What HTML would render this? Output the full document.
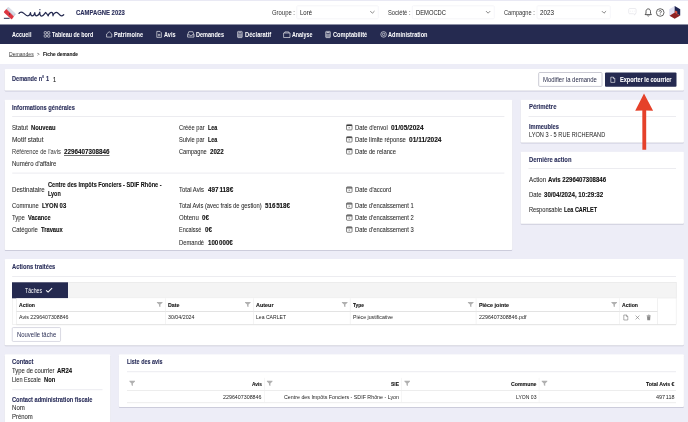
<!DOCTYPE html><html><head><meta charset="utf-8"><title>Fiche demande</title><style>

*{margin:0;padding:0;box-sizing:border-box}
html,body{width:688px;height:422px;overflow:hidden;background:#ededf7;font-family:"Liberation Sans",sans-serif}
#r{position:relative;width:688px;height:422px;overflow:hidden;background:#ededf7}
.b{position:absolute}
.card{position:absolute;background:#fff;border-radius:1px;box-shadow:0 1px 3px rgba(140,140,185,.42)}
.t{position:absolute;white-space:nowrap;transform-origin:0 50%;line-height:10px;height:10px;color:#1f1f1f}
#tx{position:absolute;left:0;top:0;width:688px;height:422px;will-change:transform}
.hr{position:absolute;height:1px;background:#ececf0}
#sv{position:absolute;left:0;top:0}

</style></head><body><div id="r">
<svg id="sv" width="688" height="422" viewBox="0 0 688 422"><defs><filter id="sh" x="-5%" y="-20%" width="110%" height="150%"><feDropShadow dx="0" dy="0.6" stdDeviation="0.7" flood-color="rgb(85,85,115)" flood-opacity="0.36"/></filter></defs>
<rect x="0" y="0" width="688" height="24.5" rx="0.0" fill="#fff"/>
<rect x="0" y="0" width="688" height="0.8" rx="0.0" fill="#e4e4f2"/>
<rect x="0" y="24.5" width="688" height="19.5" rx="0.0" fill="#252a50"/>
<rect x="0" y="44" width="688" height="20" rx="0.0" fill="#fff"/>
<svg x="0" y="0" overflow="visible" width="70" height="24" viewBox="0 0 70 24">
<path d="M6.3 9 L7.7 7.5 Q8.25 6.9 8.9 7.5 L15.4 13.6 Q15.9 14.1 15.5 14.7 L13.9 16.5 Z" fill="#c6cbd9"/>
<path d="M7.4 9 L9 7.6 L15 13.4 L13.6 15 Z" fill="#dfe2ea" opacity=".8"/>
<path d="M4.1 11.5 L6.3 9 L13.9 16.5 L12.1 19 Q11.7 19.5 11.1 19.1 L4.2 12.7 Q3.6 12.1 4.1 11.5 Z" fill="#dc3540"/>
<path d="M9.2 12.9 L10.2 13.9 L9.6 14.9 L9 14 Z" fill="#252a50"/>
<path d="M3.9 18.3 H9.6" stroke="#252a50" stroke-width="1" fill="none"/>
<path d="M19 13.4 C19.8 12.2 21 11.9 22.3 12.4 C24.5 13.3 25.8 15.8 27.9 15.8 C29.6 15.8 30.2 14 30.5 12.7 C30.5 14.5 31 15.8 32.3 15.8 C33.8 15.8 34.5 14.2 34.8 12.7 C34.8 14.5 35.3 15.8 36.6 15.8 C38.4 15.8 39.4 13.8 39.8 12.2 C39.8 14.2 40.2 16 41.7 16 C43.6 16 44.6 13.5 45.6 12.5 C46.6 13 47.2 14.5 48.2 15.8 C48.4 14.2 50.2 12.3 51.6 12.3 C52.8 12.3 53 14 53 15.8 C53.2 14 55.2 12.3 56.6 12.3 C58.4 12.3 59.6 15.8 61.3 15.8 C62.3 15.8 63.1 15.3 63.7 14.7" fill="none" stroke="#252a50" stroke-width="1.25" stroke-linecap="round" stroke-linejoin="round"/>
<circle cx="39.9" cy="9.7" r="0.65" fill="#252a50"/>
</svg>
<rect x="296.75" y="5.75" width="81.5" height="13.0" rx="1.0" fill="#fff" stroke="#ececf2" stroke-width="0.5"/>
<svg x="370" y="10.7" overflow="visible" width="4.8" height="3" viewBox="0 0 4.8 3"><path d="M0.3 0.4 L2.4 2.5 L4.5 0.4" fill="none" stroke="#555" stroke-width="0.7"/></svg>
<rect x="412.25" y="5.75" width="82.0" height="13.0" rx="1.0" fill="#fff" stroke="#ececf2" stroke-width="0.5"/>
<svg x="485.7" y="10.7" overflow="visible" width="4.8" height="3" viewBox="0 0 4.8 3"><path d="M0.3 0.4 L2.4 2.5 L4.5 0.4" fill="none" stroke="#555" stroke-width="0.7"/></svg>
<rect x="537.0" y="5.75" width="73.25" height="13.0" rx="1.0" fill="#fff" stroke="#ececf2" stroke-width="0.5"/>
<svg x="601.6" y="10.7" overflow="visible" width="4.8" height="3" viewBox="0 0 4.8 3"><path d="M0.3 0.4 L2.4 2.5 L4.5 0.4" fill="none" stroke="#555" stroke-width="0.7"/></svg>
<svg x="628.3" y="8.1" overflow="visible" width="8.2" height="7.6" viewBox="0 0 8.2 7.6"><path d="M1.4 0.4 H6.8 Q7.8 0.4 7.8 1.4 V4.6 Q7.8 5.6 6.8 5.6 H6.6 V7 L5 5.6 H1.4 Q0.4 5.6 0.4 4.6 V1.4 Q0.4 0.4 1.4 0.4 Z" fill="none" stroke="#e4e4ea" stroke-width="0.7"/><circle cx="2.3" cy="3" r="0.45" fill="#e0e0e6"/><circle cx="4.1" cy="3" r="0.45" fill="#e0e0e6"/><circle cx="5.9" cy="3" r="0.45" fill="#e0e0e6"/></svg>
<svg x="644.5" y="8.2" overflow="visible" width="7.5" height="8.8" viewBox="0 0 7.5 8.8"><path d="M3.75 0.7 C2.2 0.7 1.5 1.9 1.5 3.3 V5 L0.6 6.4 H6.9 L6 5 V3.3 C6 1.9 5.3 0.7 3.75 0.7 Z" fill="none" stroke="#222" stroke-width="0.75" stroke-linejoin="round"/><path d="M2.8 7.3 C3.1 8.1 4.4 8.1 4.7 7.3" fill="none" stroke="#222" stroke-width="0.7"/></svg>
<svg x="656" y="8.3" overflow="visible" width="8.4" height="8.4" viewBox="0 0 8.4 8.4"><circle cx="4.2" cy="4.2" r="3.8" fill="none" stroke="#222" stroke-width="0.7"/><path d="M3 3.3 C3 1.9 5.4 1.9 5.4 3.3 C5.4 4.2 4.2 4.2 4.2 5.2" fill="none" stroke="#222" stroke-width="0.7"/><circle cx="4.2" cy="6.3" r="0.45" fill="#222"/></svg>
<svg x="0" y="0" overflow="visible" width="688" height="24" viewBox="0 0 688 24">
<path d="M674.7 6 L680.2 9.2 V15.6 L674.7 18.8 L669.2 15.6 V9.2 Z" fill="#dfdff1"/>
<path d="M674.7 6 L680.2 9.2 V15.6 L674.7 12.4 Z" fill="#1f2450"/>
<path d="M674.7 12.4 L680.2 15.6 L674.7 18.8 L669.6 15.8 Z" fill="#8f2222"/>
<path d="M674.9 10.4 L677.3 11.6 V14 L674.9 12.6 Z" fill="#e5523c"/>
</svg>
<svg x="43.8" y="31.2" overflow="visible" width="6.4" height="6.4" viewBox="0 0 6.4 6.4"><rect x="0.4" y="0.4" width="2.3" height="2.3" rx="0.6" fill="none" stroke="#fff" stroke-width="0.6"/><rect x="3.7" y="0.4" width="2.3" height="2.3" rx="0.6" fill="none" stroke="#fff" stroke-width="0.6"/><rect x="0.4" y="3.7" width="2.3" height="2.3" rx="0.6" fill="none" stroke="#fff" stroke-width="0.6"/><rect x="3.7" y="3.7" width="2.3" height="2.3" rx="0.6" fill="none" stroke="#fff" stroke-width="0.6"/></svg>
<svg x="106.2" y="31.2" overflow="visible" width="6" height="6.4" viewBox="0 0 6 6.4"><path d="M0.4 2.8 L3 0.5 L5.6 2.8 V5.9 H0.4 Z" fill="none" stroke="#fff" stroke-width="0.6" stroke-linejoin="round"/></svg>
<svg x="156.4" y="31" overflow="visible" width="5.4" height="6.8" viewBox="0 0 5.4 6.8"><path d="M0.4 0.4 H3.6 L5 1.8 V6.4 H0.4 Z" fill="none" stroke="#fff" stroke-width="0.6"/><path d="M1.5 3.4 H3.9 M1.5 4.7 H3.9" fill="none" stroke="#fff" stroke-width="0.6"/></svg>
<svg x="187.2" y="31.2" overflow="visible" width="7.2" height="6.4" viewBox="0 0 7.2 6.4"><path d="M0.4 3.6 L1.6 0.5 H5.6 L6.8 3.6 V5.9 H0.4 Z M0.4 3.6 H2.4 C2.4 5 4.8 5 4.8 3.6 H6.8" fill="none" stroke="#fff" stroke-width="0.6" stroke-linejoin="round"/></svg>
<svg x="237.2" y="31" overflow="visible" width="5.4" height="7" viewBox="0 0 5.4 7"><rect x="0.4" y="0.4" width="4.6" height="6.2" rx="0.6" fill="none" stroke="#fff" stroke-width="0.6"/><rect x="0.7" y="2.4" width="4" height="3.9" fill="#fff" opacity=".45"/><path d="M1.2 1.6 H4.2" fill="none" stroke="#fff" stroke-width="0.6"/></svg>
<svg x="283.2" y="31.5" overflow="visible" width="7.2" height="6.4" viewBox="0 0 7.2 6.4"><path d="M0.4 1.5 H6.8 V6 H0.4 Z M1.3 1.5 L1.7 0.4 H5.5 L5.9 1.5" fill="none" stroke="#fff" stroke-width="0.6" stroke-linejoin="round"/></svg>
<svg x="325.3" y="31" overflow="visible" width="5.4" height="7" viewBox="0 0 5.4 7"><rect x="0.4" y="0.4" width="4.6" height="6.2" rx="0.6" fill="none" stroke="#fff" stroke-width="0.6"/><rect x="0.7" y="2.6" width="4" height="3.7" fill="#fff" opacity=".45"/><path d="M1.1 1.3 H4.3 V2 H1.1Z" fill="#fff"/></svg>
<svg x="380.4" y="31.2" overflow="visible" width="6.4" height="6.4" viewBox="0 0 6.4 6.4"><circle cx="3.2" cy="3.2" r="2.8" fill="none" stroke="#fff" stroke-width="0.6"/><circle cx="3.2" cy="3.2" r="1.2" fill="none" stroke="#fff" stroke-width="0.6"/></svg>
<rect x="4.7" y="68.9" width="679.2" height="21.6" rx="1" fill="#fff" filter="url(#sh)"/>
<rect x="538.6999999999999" y="72.5" width="63.3" height="13.9" rx="1.0" fill="#fff" stroke="#bcbcc8" stroke-width="0.8"/>
<rect x="605" y="72.5" width="71.5" height="14.3" rx="1.0" fill="#252a50"/>
<svg x="610.4" y="76.8" overflow="visible" width="4.8" height="6" viewBox="0 0 4.8 6"><path d="M0.4 0.4 H3 L4.4 1.8 V5.6 H0.4 Z M3 0.4 V1.8 H4.4" fill="none" stroke="#fff" stroke-width="0.6"/></svg>
<rect x="4.7" y="99.7" width="507.5" height="150.2" rx="1" fill="#fff" filter="url(#sh)"/>
<rect x="12.2" y="116" width="492.2" height="1" fill="#ececf0"/>
<rect x="12.2" y="172.6" width="492.2" height="1" fill="#ececf0"/>
<svg x="346.2" y="124.1" overflow="visible" width="6.2" height="6.2" viewBox="0 0 6.2 6.2"><rect x="0.35" y="0.35" width="5.5" height="5.5" rx="0.8" fill="none" stroke="#2e2e2e" stroke-width="0.6"/><path d="M0.5 1.45 H5.7" stroke="#2e2e2e" stroke-width="1"/><path d="M2.3 3.7 H3.9" stroke="#2e2e2e" stroke-width="0.6"/></svg>
<svg x="346.2" y="136.2" overflow="visible" width="6.2" height="6.2" viewBox="0 0 6.2 6.2"><rect x="0.35" y="0.35" width="5.5" height="5.5" rx="0.8" fill="none" stroke="#2e2e2e" stroke-width="0.6"/><path d="M0.5 1.45 H5.7" stroke="#2e2e2e" stroke-width="1"/><path d="M2.3 3.7 H3.9" stroke="#2e2e2e" stroke-width="0.6"/></svg>
<svg x="346.2" y="148.2" overflow="visible" width="6.2" height="6.2" viewBox="0 0 6.2 6.2"><rect x="0.35" y="0.35" width="5.5" height="5.5" rx="0.8" fill="none" stroke="#2e2e2e" stroke-width="0.6"/><path d="M0.5 1.45 H5.7" stroke="#2e2e2e" stroke-width="1"/><path d="M2.3 3.7 H3.9" stroke="#2e2e2e" stroke-width="0.6"/></svg>
<svg x="346.2" y="186.5" overflow="visible" width="6.2" height="6.2" viewBox="0 0 6.2 6.2"><rect x="0.35" y="0.35" width="5.5" height="5.5" rx="0.8" fill="none" stroke="#2e2e2e" stroke-width="0.6"/><path d="M0.5 1.45 H5.7" stroke="#2e2e2e" stroke-width="1"/><path d="M2.3 3.7 H3.9" stroke="#2e2e2e" stroke-width="0.6"/></svg>
<svg x="346.2" y="202.5" overflow="visible" width="6.2" height="6.2" viewBox="0 0 6.2 6.2"><rect x="0.35" y="0.35" width="5.5" height="5.5" rx="0.8" fill="none" stroke="#2e2e2e" stroke-width="0.6"/><path d="M0.5 1.45 H5.7" stroke="#2e2e2e" stroke-width="1"/><path d="M2.3 3.7 H3.9" stroke="#2e2e2e" stroke-width="0.6"/></svg>
<svg x="346.2" y="214.4" overflow="visible" width="6.2" height="6.2" viewBox="0 0 6.2 6.2"><rect x="0.35" y="0.35" width="5.5" height="5.5" rx="0.8" fill="none" stroke="#2e2e2e" stroke-width="0.6"/><path d="M0.5 1.45 H5.7" stroke="#2e2e2e" stroke-width="1"/><path d="M2.3 3.7 H3.9" stroke="#2e2e2e" stroke-width="0.6"/></svg>
<svg x="346.2" y="226.4" overflow="visible" width="6.2" height="6.2" viewBox="0 0 6.2 6.2"><rect x="0.35" y="0.35" width="5.5" height="5.5" rx="0.8" fill="none" stroke="#2e2e2e" stroke-width="0.6"/><path d="M0.5 1.45 H5.7" stroke="#2e2e2e" stroke-width="1"/><path d="M2.3 3.7 H3.9" stroke="#2e2e2e" stroke-width="0.6"/></svg>
<rect x="520.7" y="99.7" width="163.2" height="42.9" rx="1" fill="#fff" filter="url(#sh)"/>
<rect x="528.5" y="116" width="147.5" height="1" fill="#ececf0"/>
<rect x="520.7" y="151.85" width="163.2" height="71.95" rx="1" fill="#fff" filter="url(#sh)"/>
<rect x="528.5" y="168" width="147.5" height="1" fill="#ececf0"/>
<svg x="630" y="90" overflow="visible" width="30" height="62" viewBox="630 90 30 62"><path d="M644 93.5 L653.1 110.7 L646.2 110.5 L646.2 149.8 L642.4 149.8 L642.3 110.5 L635.2 110.7 Z" fill="#e5412a"/></svg>
<rect x="4.7" y="258.9" width="679.2" height="86.4" rx="1" fill="#fff" filter="url(#sh)"/>
<rect x="12.2" y="276" width="663.8" height="1" fill="#ececf0"/>
<rect x="12.25" y="282.55" width="663.9" height="41.7" rx="0.0" fill="#fff" stroke="#e6e6e6" stroke-width="0.5"/>
<rect x="12.25" y="282.55" width="663.9" height="15.5" rx="0.0" fill="#f4f4f4" stroke="#e6e6e6" stroke-width="0.5"/>
<rect x="12" y="282.3" width="56" height="16" rx="0.0" fill="#252a50"/>
<svg x="45.5" y="287.6" overflow="visible" width="7.2" height="5.2" viewBox="0 0 7.2 5.2"><path d="M0.6 2.7 L2.6 4.5 L6.6 0.6" fill="none" stroke="#fff" stroke-width="1.1"/></svg>
<rect x="16.3" y="298.3" width="641.2" height="26.2" rx="0.0" fill="#fff"/><rect x="16.3" y="298.3" width="0.5" height="26.2" fill="#e3e3e3"/><rect x="657.0" y="298.3" width="0.5" height="26.2" fill="#e3e3e3"/>
<rect x="16.3" y="311" width="641.2" height="1" fill="#e3e3e3"/>
<rect x="16.3" y="324.2" width="659.7" height="1" fill="#e3e3e3"/>
<rect x="165.0" y="298.3" width="0.5" height="26" rx="0.0" fill="#e9e9e9"/>
<rect x="253.1" y="298.3" width="0.5" height="26" rx="0.0" fill="#e9e9e9"/>
<rect x="349.9" y="298.3" width="0.5" height="26" rx="0.0" fill="#e9e9e9"/>
<rect x="475.8" y="298.3" width="0.5" height="26" rx="0.0" fill="#e9e9e9"/>
<rect x="619.5" y="298.3" width="0.5" height="26" rx="0.0" fill="#e9e9e9"/>
<svg x="156.9" y="301.8" overflow="visible" width="5.6" height="5.4" viewBox="0 0 5.6 5.4"><path d="M0 0.1 H5.6 V0.9 L3.5 2.8 V5.3 L2.1 4.6 V2.8 L0 0.9 Z" fill="#b0b0b0"/></svg>
<svg x="245.0" y="301.8" overflow="visible" width="5.6" height="5.4" viewBox="0 0 5.6 5.4"><path d="M0 0.1 H5.6 V0.9 L3.5 2.8 V5.3 L2.1 4.6 V2.8 L0 0.9 Z" fill="#b0b0b0"/></svg>
<svg x="341.9" y="301.8" overflow="visible" width="5.6" height="5.4" viewBox="0 0 5.6 5.4"><path d="M0 0.1 H5.6 V0.9 L3.5 2.8 V5.3 L2.1 4.6 V2.8 L0 0.9 Z" fill="#b0b0b0"/></svg>
<svg x="467.9" y="301.8" overflow="visible" width="5.6" height="5.4" viewBox="0 0 5.6 5.4"><path d="M0 0.1 H5.6 V0.9 L3.5 2.8 V5.3 L2.1 4.6 V2.8 L0 0.9 Z" fill="#b0b0b0"/></svg>
<svg x="611.4" y="301.8" overflow="visible" width="5.6" height="5.4" viewBox="0 0 5.6 5.4"><path d="M0 0.1 H5.6 V0.9 L3.5 2.8 V5.3 L2.1 4.6 V2.8 L0 0.9 Z" fill="#b0b0b0"/></svg>
<svg x="623.4" y="314.6" overflow="visible" width="5" height="6" viewBox="0 0 5 6"><path d="M0.4 0.4 H3 L4.4 1.8 V5.4 H0.4 Z M3 0.4 V1.8 H4.4" fill="none" stroke="#6a6a6a" stroke-width="0.55"/></svg>
<svg x="635.2" y="315.2" overflow="visible" width="4.6" height="4.6" viewBox="0 0 4.6 4.6"><path d="M0.4 0.4 L4.2 4.2 M4.2 0.4 L0.4 4.2" fill="none" stroke="#6a6a6a" stroke-width="0.55"/></svg>
<svg x="646.2" y="314.6" overflow="visible" width="5" height="6" viewBox="0 0 5 6"><path d="M0.3 1.2 H4.7 M1.8 1.2 V0.4 H3.2 V1.2" fill="none" stroke="#808080" stroke-width="0.55"/><path d="M0.8 1.6 H4.2 L3.9 5.6 H1.1 Z" fill="#8a8a8a"/></svg>
<rect x="12.25" y="327.55" width="48.3" height="13.9" rx="1.0" fill="#fff" stroke="#b4b4c6" stroke-width="0.5"/>
<rect x="4.7" y="354.2" width="105.5" height="75.8" rx="1" fill="#fff" filter="url(#sh)"/>
<rect x="12.2" y="389.2" width="90.3" height="1" fill="#ececf0"/>
<rect x="118.9" y="354.2" width="565.0" height="52.7" rx="1" fill="#fff" filter="url(#sh)"/>
<rect x="127" y="371.2" width="549" height="1" fill="#ececf0"/>
<rect x="127" y="390" width="549" height="1" fill="#ededed"/>
<rect x="127" y="402.2" width="549" height="1" fill="#ededed"/>
<rect x="264.1" y="377.8" width="0.5" height="24.6" rx="0.0" fill="#ededed"/>
<rect x="401.2" y="377.8" width="0.5" height="24.6" rx="0.0" fill="#ededed"/>
<rect x="538.8" y="377.8" width="0.5" height="24.6" rx="0.0" fill="#ededed"/>
<svg x="129.4" y="380.6" overflow="visible" width="5.6" height="5.4" viewBox="0 0 5.6 5.4"><path d="M0 0.1 H5.6 V0.9 L3.5 2.8 V5.3 L2.1 4.6 V2.8 L0 0.9 Z" fill="#b0b0b0"/></svg>
<svg x="266.9" y="380.6" overflow="visible" width="5.6" height="5.4" viewBox="0 0 5.6 5.4"><path d="M0 0.1 H5.6 V0.9 L3.5 2.8 V5.3 L2.1 4.6 V2.8 L0 0.9 Z" fill="#b0b0b0"/></svg>
<svg x="404.4" y="380.6" overflow="visible" width="5.6" height="5.4" viewBox="0 0 5.6 5.4"><path d="M0 0.1 H5.6 V0.9 L3.5 2.8 V5.3 L2.1 4.6 V2.8 L0 0.9 Z" fill="#b0b0b0"/></svg>
<svg x="541.7" y="380.6" overflow="visible" width="5.6" height="5.4" viewBox="0 0 5.6 5.4"><path d="M0 0.1 H5.6 V0.9 L3.5 2.8 V5.3 L2.1 4.6 V2.8 L0 0.9 Z" fill="#b0b0b0"/></svg>
</svg>
<div id="tx">
<span class="t" style="left:76.25px;top:8.1px;font-size:6.4px;font-weight:700;-webkit-text-stroke:0.1px;color:#2a2e5a;transform:scaleX(0.9231);">CAMPAGNE 2023</span>
<span class="t" style="left:272px;top:8.1px;font-size:6.4px;color:#333;transform:scaleX(0.9246);">Groupe :</span>
<span class="t" style="left:300px;top:8.1px;font-size:6.4px;color:#222;transform:scaleX(0.9377);">Loré</span>
<span class="t" style="left:387.75px;top:8.1px;font-size:6.4px;color:#333;transform:scaleX(0.9045);">Société :</span>
<span class="t" style="left:415.75px;top:8.1px;font-size:6.4px;color:#222;transform:scaleX(0.9082);">DEMOCDC</span>
<span class="t" style="left:504px;top:8.1px;font-size:6.4px;color:#333;transform:scaleX(0.8829);">Campagne :</span>
<span class="t" style="left:540.25px;top:8.1px;font-size:6.4px;color:#222;transform:scaleX(0.9846);">2023</span>
<span class="t" style="left:11.7px;top:30.1px;font-size:6.4px;font-weight:700;-webkit-text-stroke:0.1px;color:#fff;-webkit-text-stroke:0;transform:scaleX(0.8533);">Accueil</span>
<span class="t" style="left:51.75px;top:30.1px;font-size:6.4px;font-weight:700;-webkit-text-stroke:0.1px;color:#fff;-webkit-text-stroke:0;transform:scaleX(0.8437);">Tableau de bord</span>
<span class="t" style="left:114px;top:30.1px;font-size:6.4px;font-weight:700;-webkit-text-stroke:0.1px;color:#fff;-webkit-text-stroke:0;transform:scaleX(0.8780);">Patrimoine</span>
<span class="t" style="left:163.5px;top:30.1px;font-size:6.4px;font-weight:700;-webkit-text-stroke:0.1px;color:#fff;-webkit-text-stroke:0;transform:scaleX(0.8669);">Avis</span>
<span class="t" style="left:195.75px;top:30.1px;font-size:6.4px;font-weight:700;-webkit-text-stroke:0.1px;color:#fff;-webkit-text-stroke:0;transform:scaleX(0.8661);">Demandes</span>
<span class="t" style="left:244.5px;top:30.1px;font-size:6.4px;font-weight:700;-webkit-text-stroke:0.1px;color:#fff;-webkit-text-stroke:0;transform:scaleX(0.9008);">Déclaratif</span>
<span class="t" style="left:291.5px;top:30.1px;font-size:6.4px;font-weight:700;-webkit-text-stroke:0.1px;color:#fff;-webkit-text-stroke:0;transform:scaleX(0.8362);">Analyse</span>
<span class="t" style="left:332.75px;top:30.1px;font-size:6.4px;font-weight:700;-webkit-text-stroke:0.1px;color:#fff;-webkit-text-stroke:0;transform:scaleX(0.8849);">Comptabilité</span>
<span class="t" style="left:388.25px;top:30.1px;font-size:6.4px;font-weight:700;-webkit-text-stroke:0.1px;color:#fff;-webkit-text-stroke:0;transform:scaleX(0.8760);">Administration</span>
<span class="t" style="left:9px;top:49.0px;font-size:6.2px;color:#3a3a3a;text-decoration:underline;text-decoration-color:rgba(40,40,40,.55);text-underline-offset:0.3px;transform:scaleX(0.8251);">Demandes</span>
<span class="t" style="left:37.2px;top:49.0px;font-size:6.2px;color:#333;transform:scaleX(0.7172);">&gt;</span>
<span class="t" style="left:43px;top:49.0px;font-size:6.2px;font-weight:700;-webkit-text-stroke:0.1px;color:#1a1a1a;transform:scaleX(0.7770);">Fiche demande</span>
<span class="t" style="left:12.2px;top:74.4px;font-size:6.4px;font-weight:700;-webkit-text-stroke:0.1px;color:#2a2e5a;transform:scaleX(0.8738);">Demande n° 1</span>
<span class="t" style="left:52.6px;top:75.1px;font-size:6.6px;color:#111;-webkit-text-stroke:0.1px;transform:scaleX(0.8443);">1</span>
<span class="t" style="left:543.4px;top:75.2px;font-size:6.4px;color:#2a2d4a;transform:scaleX(0.9308);">Modifier la demande</span>
<span class="t" style="left:620.25px;top:75.1px;font-size:6.4px;font-weight:700;-webkit-text-stroke:0.1px;color:#fff;transform:scaleX(0.8681);">Exporter le courrier</span>
<span class="t" style="left:12.2px;top:102.7px;font-size:6.4px;font-weight:700;-webkit-text-stroke:0.1px;color:#2a2e5a;transform:scaleX(0.8958);">Informations générales</span>
<span class="t" style="left:12px;top:122.9px;font-size:6.4px;color:#2a2a2a;-webkit-text-stroke:0.06px;transform:scaleX(0.9519);">Statut</span>
<span class="t" style="left:31.2px;top:122.9px;font-size:6.4px;font-weight:700;-webkit-text-stroke:0.1px;color:#111;transform:scaleX(0.9111);">Nouveau</span>
<span class="t" style="left:12px;top:135.0px;font-size:6.4px;color:#2a2a2a;-webkit-text-stroke:0.06px;transform:scaleX(1.0075);">Motif statut</span>
<span class="t" style="left:12px;top:147.0px;font-size:6.4px;color:#333;transform:scaleX(0.9011);">Référence de l&#x27;avis</span>
<span class="t" style="left:63.7px;top:147.0px;font-size:6.4px;font-weight:700;-webkit-text-stroke:0.1px;color:#111;text-decoration:underline;text-decoration-color:rgba(20,20,20,.6);text-underline-offset:0.5px;transform:scaleX(0.9844);">2296407308846</span>
<span class="t" style="left:12px;top:159.0px;font-size:6.4px;color:#2a2a2a;-webkit-text-stroke:0.06px;transform:scaleX(0.9459);">Numéro d&#x27;affaire</span>
<span class="t" style="left:12px;top:185.3px;font-size:6.4px;color:#2a2a2a;-webkit-text-stroke:0.06px;transform:scaleX(0.9616);">Destinataire</span>
<span class="t" style="left:48.1px;top:180.3px;font-size:6.4px;font-weight:700;-webkit-text-stroke:0.1px;color:#111;transform:scaleX(0.8741);">Centre des Impôts Fonciers - SDIF Rhône -</span>
<span class="t" style="left:48.1px;top:189.3px;font-size:6.4px;font-weight:700;-webkit-text-stroke:0.1px;color:#111;transform:scaleX(0.8449);">Lyon</span>
<span class="t" style="left:12px;top:201.3px;font-size:6.4px;color:#2a2a2a;-webkit-text-stroke:0.06px;transform:scaleX(0.9090);">Commune</span>
<span class="t" style="left:41.8px;top:201.3px;font-size:6.4px;font-weight:700;-webkit-text-stroke:0.1px;color:#111;transform:scaleX(0.9285);">LYON 03</span>
<span class="t" style="left:12px;top:213.2px;font-size:6.4px;color:#2a2a2a;-webkit-text-stroke:0.06px;transform:scaleX(0.9308);">Type</span>
<span class="t" style="left:27.9px;top:213.2px;font-size:6.4px;font-weight:700;-webkit-text-stroke:0.1px;color:#111;transform:scaleX(0.8830);">Vacance</span>
<span class="t" style="left:12px;top:225.2px;font-size:6.4px;color:#2a2a2a;-webkit-text-stroke:0.06px;transform:scaleX(0.9308);">Catégorie</span>
<span class="t" style="left:41.2px;top:225.2px;font-size:6.4px;font-weight:700;-webkit-text-stroke:0.1px;color:#111;transform:scaleX(0.9019);">Travaux</span>
<span class="t" style="left:179.3px;top:122.9px;font-size:6.4px;color:#2a2a2a;-webkit-text-stroke:0.06px;transform:scaleX(0.9007);">Créée par</span>
<span class="t" style="left:208.2px;top:122.9px;font-size:6.4px;font-weight:700;-webkit-text-stroke:0.1px;color:#111;transform:scaleX(0.8443);">Lea</span>
<span class="t" style="left:179.3px;top:135.0px;font-size:6.4px;color:#2a2a2a;-webkit-text-stroke:0.06px;transform:scaleX(0.8972);">Suivie par</span>
<span class="t" style="left:208.2px;top:135.0px;font-size:6.4px;font-weight:700;-webkit-text-stroke:0.1px;color:#111;transform:scaleX(0.8443);">Lea</span>
<span class="t" style="left:179.3px;top:147.0px;font-size:6.4px;color:#2a2a2a;-webkit-text-stroke:0.06px;transform:scaleX(0.8860);">Campagne</span>
<span class="t" style="left:210.2px;top:147.0px;font-size:6.4px;font-weight:700;-webkit-text-stroke:0.1px;color:#111;transform:scaleX(0.9635);">2022</span>
<span class="t" style="left:179.3px;top:185.3px;font-size:6.4px;color:#2a2a2a;-webkit-text-stroke:0.06px;transform:scaleX(0.9260);">Total Avis</span>
<span class="t" style="left:207.6px;top:185.3px;font-size:6.4px;font-weight:700;-webkit-text-stroke:0.1px;color:#111;word-spacing:-1px;transform:scaleX(0.9956);">497 118€</span>
<span class="t" style="left:179.3px;top:201.0px;font-size:6.4px;color:#2a2a2a;-webkit-text-stroke:0.06px;transform:scaleX(0.9035);">Total Avis (avec frais de gestion)</span>
<span class="t" style="left:265.2px;top:201.0px;font-size:6.4px;font-weight:700;-webkit-text-stroke:0.1px;color:#111;word-spacing:-1px;transform:scaleX(0.9744);">516 518€</span>
<span class="t" style="left:179.3px;top:213.2px;font-size:6.4px;color:#2a2a2a;-webkit-text-stroke:0.06px;transform:scaleX(0.9443);">Obtenu</span>
<span class="t" style="left:202.3px;top:213.2px;font-size:6.4px;font-weight:700;-webkit-text-stroke:0.1px;color:#111;transform:scaleX(0.9705);">0€</span>
<span class="t" style="left:179.3px;top:225.2px;font-size:6.4px;color:#2a2a2a;-webkit-text-stroke:0.06px;transform:scaleX(0.8636);">Encaissé</span>
<span class="t" style="left:204.9px;top:225.2px;font-size:6.4px;font-weight:700;-webkit-text-stroke:0.1px;color:#111;transform:scaleX(0.9705);">0€</span>
<span class="t" style="left:179.3px;top:237.8px;font-size:6.4px;color:#2a2a2a;-webkit-text-stroke:0.06px;transform:scaleX(0.9055);">Demandé</span>
<span class="t" style="left:208px;top:237.8px;font-size:6.4px;font-weight:700;-webkit-text-stroke:0.1px;color:#111;word-spacing:-1px;transform:scaleX(0.9666);">100 000€</span>
<span class="t" style="left:355.2px;top:122.9px;font-size:6.4px;color:#2a2a2a;-webkit-text-stroke:0.06px;transform:scaleX(0.9256);">Date d&#x27;envoi</span>
<span class="t" style="left:391.1px;top:122.9px;font-size:6.4px;font-weight:700;-webkit-text-stroke:0.1px;color:#111;transform:scaleX(1.0187);">01/05/2024</span>
<span class="t" style="left:355.2px;top:135.0px;font-size:6.4px;color:#2a2a2a;-webkit-text-stroke:0.06px;transform:scaleX(0.9244);">Date limite réponse</span>
<span class="t" style="left:409.4px;top:135.0px;font-size:6.4px;font-weight:700;-webkit-text-stroke:0.1px;color:#111;transform:scaleX(1.0272);">01/11/2024</span>
<span class="t" style="left:355.2px;top:147.0px;font-size:6.4px;color:#2a2a2a;-webkit-text-stroke:0.06px;transform:scaleX(0.9086);">Date de relance</span>
<span class="t" style="left:355.2px;top:185.3px;font-size:6.4px;color:#2a2a2a;-webkit-text-stroke:0.06px;transform:scaleX(0.9252);">Date d&#x27;accord</span>
<span class="t" style="left:355.2px;top:201.3px;font-size:6.4px;color:#2a2a2a;-webkit-text-stroke:0.06px;transform:scaleX(0.9072);">Date d&#x27;encaissement 1</span>
<span class="t" style="left:355.2px;top:213.2px;font-size:6.4px;color:#2a2a2a;-webkit-text-stroke:0.06px;transform:scaleX(0.9072);">Date d&#x27;encaissement 2</span>
<span class="t" style="left:355.2px;top:225.2px;font-size:6.4px;color:#2a2a2a;-webkit-text-stroke:0.06px;transform:scaleX(0.9072);">Date d&#x27;encaissement 3</span>
<span class="t" style="left:528.5px;top:102.35px;font-size:6.4px;font-weight:700;-webkit-text-stroke:0.1px;color:#2a2e5a;transform:scaleX(0.9322);">Périmètre</span>
<span class="t" style="left:528.5px;top:122.1px;font-size:6.4px;font-weight:700;-webkit-text-stroke:0.1px;color:#2a2e5a;transform:scaleX(0.8985);">Immeubles</span>
<span class="t" style="left:528.5px;top:130.1px;font-size:6.4px;color:#222;transform:scaleX(0.8812);">LYON 3 - 5 RUE RICHERAND</span>
<span class="t" style="left:528.5px;top:154.5px;font-size:6.4px;font-weight:700;-webkit-text-stroke:0.1px;color:#2a2e5a;transform:scaleX(0.9134);">Dernière action</span>
<span class="t" style="left:528.5px;top:175.2px;font-size:6.4px;color:#2a2a2a;-webkit-text-stroke:0.06px;transform:scaleX(0.9682);">Action</span>
<span class="t" style="left:548.3px;top:175.2px;font-size:6.4px;font-weight:700;-webkit-text-stroke:0.1px;color:#111;transform:scaleX(0.9486);">Avis 2296407308846</span>
<span class="t" style="left:528.5px;top:190.3px;font-size:6.4px;color:#2a2a2a;-webkit-text-stroke:0.06px;transform:scaleX(0.9259);">Date</span>
<span class="t" style="left:543.9px;top:190.3px;font-size:6.4px;font-weight:700;-webkit-text-stroke:0.1px;color:#111;transform:scaleX(0.9669);">30/04/2024, 10:29:32</span>
<span class="t" style="left:528.5px;top:205.2px;font-size:6.4px;color:#2a2a2a;-webkit-text-stroke:0.06px;transform:scaleX(0.8871);">Responsable</span>
<span class="t" style="left:564px;top:205.2px;font-size:6.4px;font-weight:700;-webkit-text-stroke:0.1px;color:#111;transform:scaleX(0.8526);">Lea CARLET</span>
<span class="t" style="left:12.2px;top:261.6px;font-size:6.4px;font-weight:700;-webkit-text-stroke:0.1px;color:#2a2e5a;transform:scaleX(0.9030);">Actions traitées</span>
<span class="t" style="left:24.8px;top:285.8px;font-size:6.4px;color:#fff;transform:scaleX(0.8155);">Tâches</span>
<span class="t" style="left:19px;top:299.8px;font-size:5.5px;font-weight:700;-webkit-text-stroke:0.1px;color:#111;transform:scaleX(0.9343);">Action</span>
<span class="t" style="left:168px;top:299.8px;font-size:5.5px;font-weight:700;-webkit-text-stroke:0.1px;color:#111;transform:scaleX(0.9646);">Date</span>
<span class="t" style="left:255.8px;top:299.8px;font-size:5.5px;font-weight:700;-webkit-text-stroke:0.1px;color:#111;transform:scaleX(0.9868);">Auteur</span>
<span class="t" style="left:353px;top:299.8px;font-size:5.5px;font-weight:700;-webkit-text-stroke:0.1px;color:#111;transform:scaleX(0.8844);">Type</span>
<span class="t" style="left:478.6px;top:299.8px;font-size:5.5px;font-weight:700;-webkit-text-stroke:0.1px;color:#111;transform:scaleX(0.9811);">Pièce jointe</span>
<span class="t" style="left:622.3px;top:299.8px;font-size:5.5px;font-weight:700;-webkit-text-stroke:0.1px;color:#111;transform:scaleX(0.9343);">Action</span>
<span class="t" style="left:19px;top:312.4px;font-size:5.5px;color:#222;transform:scaleX(0.9594);">Avis 2296407308846</span>
<span class="t" style="left:168px;top:312.4px;font-size:5.5px;color:#222;transform:scaleX(0.9625);">30/04/2024</span>
<span class="t" style="left:255.8px;top:312.4px;font-size:5.5px;color:#222;transform:scaleX(0.9257);">Lea CARLET</span>
<span class="t" style="left:353px;top:312.4px;font-size:5.5px;color:#222;transform:scaleX(0.9481);">Pièce justificative</span>
<span class="t" style="left:478.6px;top:312.4px;font-size:5.5px;color:#222;transform:scaleX(0.9683);">2296407308846.pdf</span>
<span class="t" style="left:16.8px;top:330.4px;font-size:6.4px;color:#2b2f55;transform:scaleX(0.9271);">Nouvelle tâche</span>
<span class="t" style="left:12.2px;top:357.1px;font-size:6.4px;font-weight:700;-webkit-text-stroke:0.1px;color:#2a2e5a;transform:scaleX(0.8993);">Contact</span>
<span class="t" style="left:12.2px;top:366.2px;font-size:6.4px;color:#2a2a2a;-webkit-text-stroke:0.06px;transform:scaleX(0.9223);">Type de courrier</span>
<span class="t" style="left:57.3px;top:366.2px;font-size:6.4px;font-weight:700;-webkit-text-stroke:0.1px;color:#111;transform:scaleX(0.9239);">AR24</span>
<span class="t" style="left:12.2px;top:374.6px;font-size:6.4px;color:#2a2a2a;-webkit-text-stroke:0.06px;transform:scaleX(0.8715);">Lien Escale</span>
<span class="t" style="left:43.5px;top:374.6px;font-size:6.4px;font-weight:700;-webkit-text-stroke:0.1px;color:#111;transform:scaleX(0.9085);">Non</span>
<span class="t" style="left:12.2px;top:395.1px;font-size:6.4px;font-weight:700;-webkit-text-stroke:0.1px;color:#2a2e5a;transform:scaleX(0.8809);">Contact administration fiscale</span>
<span class="t" style="left:12.2px;top:403.4px;font-size:6.4px;color:#2a2a2a;-webkit-text-stroke:0.06px;transform:scaleX(0.9481);">Nom</span>
<span class="t" style="left:12.2px;top:411.9px;font-size:6.4px;color:#2a2a2a;-webkit-text-stroke:0.06px;transform:scaleX(0.9290);">Prénom</span>
<span class="t" style="left:127px;top:357.4px;font-size:6.4px;font-weight:700;-webkit-text-stroke:0.1px;color:#2a2e5a;transform:scaleX(0.8468);">Liste des avis</span>
<span class="t" style="left:251.5px;top:379.1px;font-size:5.5px;font-weight:700;-webkit-text-stroke:0.1px;color:#111;transform:scaleX(0.8755);">Avis</span>
<span class="t" style="left:391px;top:379.1px;font-size:5.5px;font-weight:700;-webkit-text-stroke:0.1px;color:#111;transform:scaleX(0.9014);">SIE</span>
<span class="t" style="left:510.5px;top:379.1px;font-size:5.5px;font-weight:700;-webkit-text-stroke:0.1px;color:#111;transform:scaleX(0.9483);">Commune</span>
<span class="t" style="left:645.5px;top:379.1px;font-size:5.5px;font-weight:700;-webkit-text-stroke:0.1px;color:#111;transform:scaleX(0.9480);">Total Avis €</span>
<span class="t" style="left:223px;top:392.1px;font-size:5.5px;color:#222;transform:scaleX(0.9682);">2296407308846</span>
<span class="t" style="left:284px;top:392.1px;font-size:5.5px;color:#222;transform:scaleX(0.9637);">Centre des Impôts Fonciers - SDIF Rhône - Lyon</span>
<span class="t" style="left:515.5px;top:392.1px;font-size:5.5px;color:#222;transform:scaleX(0.9226);">LYON 03</span>
<span class="t" style="left:655.5px;top:392.1px;font-size:5.5px;color:#222;word-spacing:-0.8px;transform:scaleX(0.9900);">497 118</span>
</div></div></body></html>
